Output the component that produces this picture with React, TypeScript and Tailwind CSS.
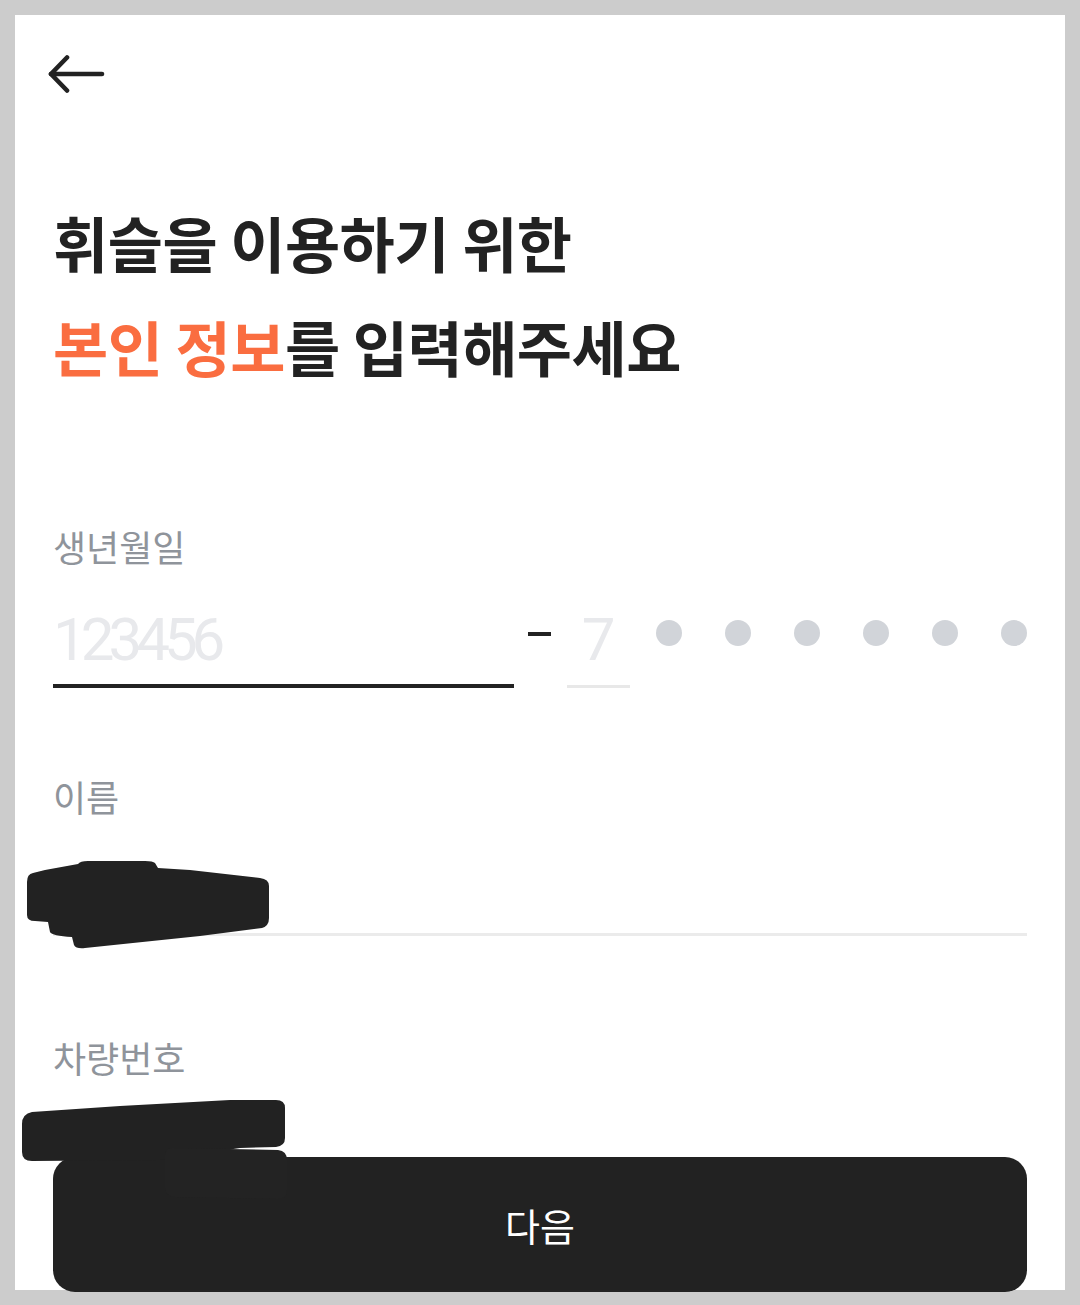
import React from "react";

const FONT = { fontFamily: '"Noto Sans CJK KR", "Noto Sans", sans-serif' };

function BackArrow() {
  return (
    <svg width="60" height="40" viewBox="0 0 60 40" fill="none">
      <path d="M3 19 H54" stroke="#222222" strokeWidth="4.6" strokeLinecap="round" />
      <path d="M19 2.5 L3 19 L19 35.5" stroke="#222222" strokeWidth="4.6" strokeLinecap="round" strokeLinejoin="round" />
    </svg>
  );
}

function Redactions() {
  return (
    <svg
      className="pointer-events-none absolute left-0 top-0"
      width="1080"
      height="1305"
      viewBox="0 0 1080 1305"
    >
      <path
        fill="#222222"
        d="M33 873 Q27 874 27 882 L27 915 Q27 921 35 921 L48 922 L50 932 Q52 936 72 937 L74 945 Q76 949 85 948 L200 936 L262 928 Q269 926 269 918 L269 886 Q269 879 260 878 L190 870 L158 868 L155 863 Q153 861 145 861 L88 861 Q80 861 78 864 L45 870 Z"
      />
      <path
        fill="#222222"
        d="M32 1112 Q22 1114 22 1124 L22 1152 Q22 1161 32 1161 L160 1160 L240 1148 L276 1147 Q285 1146 285 1138 L285 1108 Q285 1100 276 1100 L230 1100 L120 1106 Z"
      />
      <path
        fill="#232323"
        d="M172 1148 L278 1150 Q287 1151 287 1160 L287 1190 Q287 1199 278 1199 L175 1197 Q165 1196 165 1188 L165 1156 Q165 1148 172 1148 Z"
      />
    </svg>
  );
}

export default function App() {
  return (
    <div className="relative h-[1305px] w-[1080px] bg-[#cccccc] pt-[15px] pl-[15px]" style={FONT}>
      <div className="h-[1275px] w-[1050px] bg-white pl-[38px] pr-[38px] pt-[40px]">
        <div className="ml-[-5px] h-[38px]">
          <BackArrow />
        </div>

        <h1 className="mt-[97px] text-[60px] font-bold leading-[104px] tracking-[-0.5px] text-[#222222]">
          <div>휘슬을 이용하기 위한</div>
          <div>
            <span className="text-[#fa6d40]">본인 정보</span>를 입력해주세요
          </div>
        </h1>

        <div className="mt-[124px] text-[36px] leading-[48px] tracking-[0px] text-[#8f949b]">생년월일</div>

        <div className="mt-[35px] flex items-end">
          <div className="w-[461px] border-b-4 border-[#222222] pb-[9px]">
            <div
              className="text-[60px] leading-[70px] tracking-[-6px] text-[#e8e9ec]"
              style={{ fontFamily: '"Roboto", "Noto Sans", sans-serif' }}
            >
              123456
            </div>
          </div>
          <div className="ml-[14px] mb-[52px] h-[4px] w-[23px] bg-[#222222]" />
          <div className="ml-[16px] w-[63px] border-b-[3px] border-[#e8e8e8] pb-[10px] text-center">
            <div
              className="text-[60px] leading-[70px] text-[#e8e9ec]"
              style={{ fontFamily: '"Roboto", "Noto Sans", sans-serif' }}
            >
              7
            </div>
          </div>
          <div className="mb-[42px] ml-[26px] flex gap-[43px]">
            <span className="block h-[26px] w-[26px] rounded-full bg-[#d1d4d9]" />
            <span className="block h-[26px] w-[26px] rounded-full bg-[#d1d4d9]" />
            <span className="block h-[26px] w-[26px] rounded-full bg-[#d1d4d9]" />
            <span className="block h-[26px] w-[26px] rounded-full bg-[#d1d4d9]" />
            <span className="block h-[26px] w-[26px] rounded-full bg-[#d1d4d9]" />
            <span className="block h-[26px] w-[26px] rounded-full bg-[#d1d4d9]" />
          </div>
        </div>

        <div className="mt-[84px] text-[36px] leading-[48px] tracking-[0px] text-[#8f949b]">이름</div>
        <div className="h-[116px] border-b-[3px] border-[#ebebeb]" />

        <div className="mt-[97px] text-[36px] leading-[48px] tracking-[0px] text-[#8f949b]">차량번호</div>

        <button className="mt-[76px] flex h-[135px] w-full items-center justify-center rounded-[22px] bg-[#222222] text-[38px] text-white">
          다음
        </button>
      </div>
      <Redactions />
    </div>
  );
}
